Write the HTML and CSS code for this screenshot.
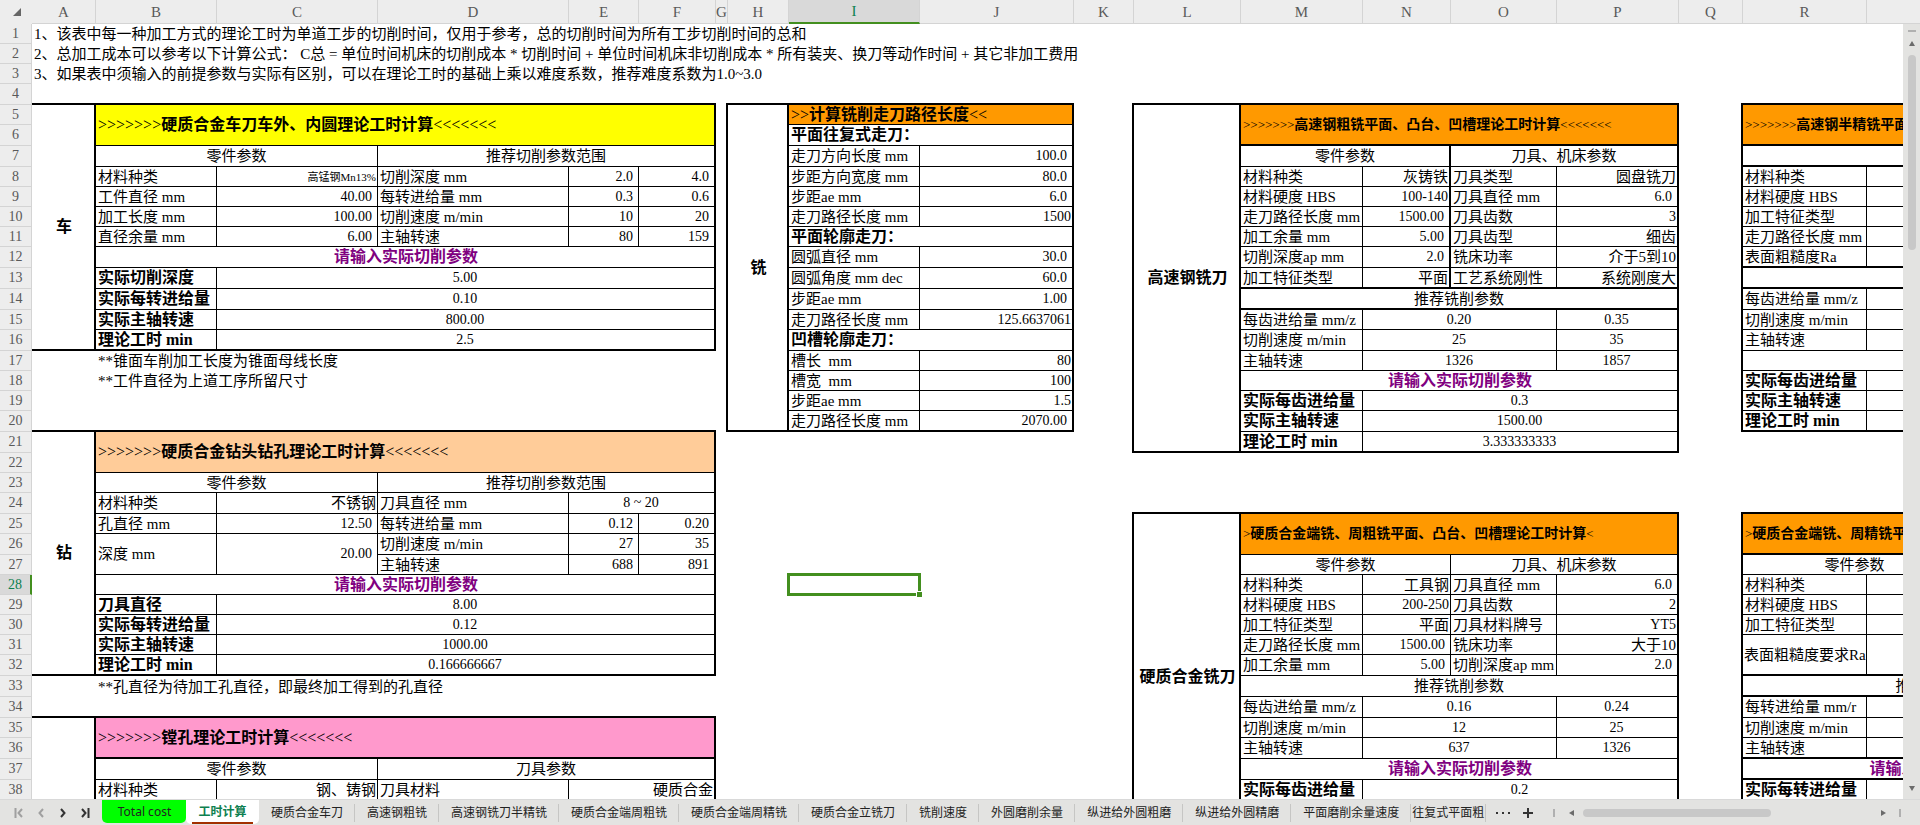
FILE: index.html
```html
<!DOCTYPE html>
<html lang="zh-CN">
<head>
<meta charset="utf-8">
<title>工时计算</title>
<link rel="stylesheet" href="styles.css">
</head>
<body>
<div class="app">
<main class="main">
<div class="sheet">
<table class="grid">
<colgroup>
<col class="w-head"><col class="w-a"><col class="w-b"><col class="w-c"><col class="w-d"><col class="w-e"><col class="w-f"><col class="w-g"><col class="w-h"><col class="w-i"><col class="w-j"><col class="w-k"><col class="w-l"><col class="w-m"><col class="w-n"><col class="w-o"><col class="w-p"><col class="w-q"><col class="w-r"><col class="w-s"><col class="w-t"><col class="w-u"><col class="w-v">
</colgroup>
<thead>
<tr><th class="corner"><svg width="8" height="8" viewBox="0 0 8 8"><path d="M8 0V8H0Z" fill="#666"/></svg></th><th>A</th><th>B</th><th>C</th><th>D</th><th>E</th><th>F</th><th>G</th><th>H</th><th class="on">I</th><th>J</th><th>K</th><th>L</th><th>M</th><th>N</th><th>O</th><th>P</th><th>Q</th><th>R</th><th></th><th></th><th></th><th></th></tr>
</thead>
<tbody>
<tr><th>1</th><td colspan="22" class="intro">1、该表中每一种加工方式的理论工时为单道工步的切削时间，仅用于参考，总的切削时间为所有工步切削时间的总和</td></tr>
<tr><th>2</th><td colspan="22" class="intro">2、总加工成本可以参考以下计算公式： C总 = 单位时间机床的切削成本 * 切削时间 + 单位时间机床非切削成本 * 所有装夹、换刀等动作时间 + 其它非加工费用</td></tr>
<tr><th>3</th><td colspan="22" class="intro">3、如果表中须输入的前提参数与实际有区别，可以在理论工时的基础上乘以难度系数，推荐难度系数为1.0~3.0</td></tr>
<tr class="tall"><th>4</th><td colspan="6" class="b"></td><td class="joint"></td><td colspan="3" class="b"></td><td class="joint"></td><td colspan="5" class="b"></td><td class="joint"></td><td colspan="5" class="b"></td></tr>
<tr><th>5</th>
<td rowspan="12" class="c r b side">车</td><td colspan="5" rowspan="2" class="c r title yellow">&gt;&gt;&gt;&gt;&gt;&gt;&gt;<b>硬质合金车刀车外、内圆理论工时计算</b>&lt;&lt;&lt;&lt;&lt;&lt;&lt;</td>
<td rowspan="16" class="r"></td><td rowspan="16" class="c r b side">铣</td><td colspan="2" class="c r title orange">&gt;&gt;<b>计算铣削走刀路径长度</b>&lt;&lt;</td>
<td rowspan="17" class="r"></td><td rowspan="17" class="c r b side">高速钢铣刀</td><td colspan="4" rowspan="2" class="c r b title orange small">&gt;&gt;&gt;&gt;&gt;&gt;&gt;<b>高速钢粗铣平面、凸台、凹槽理论工时计算</b>&lt;&lt;&lt;&lt;&lt;&lt;&lt;</td>
<td rowspan="16" class="r"></td><td colspan="5" rowspan="2" class="c b title orange small">&gt;&gt;&gt;&gt;&gt;&gt;&gt;<b>高速钢半精铣平面</b></td></tr>
<tr class="tall"><th>6</th><td colspan="2" class="c r key">平面往复式走刀：</td></tr>
<tr class="tall"><th>7</th>
<td colspan="2" class="c mid">零件参数</td><td colspan="3" class="c r mid">推荐切削参数范围</td>
<td class="c">走刀方向长度 mm</td><td class="c r num pad">100.0</td>
<td colspan="2" class="c r mid">零件参数</td><td colspan="2" class="c r mid">刀具、机床参数</td>
<td colspan="5" class="c b"></td></tr>
<tr><th>8</th>
<td class="c">材料种类</td><td class="c num tiny">高锰钢Mn13%</td><td class="c">切削深度 mm</td><td class="c num pad">2.0</td><td class="c r num pad">4.0</td>
<td class="c">步距方向宽度 mm</td><td class="c r num pad">80.0</td>
<td class="c">材料种类</td><td class="c r end">灰铸铁</td><td class="c">刀具类型</td><td class="c r end">圆盘铣刀</td>
<td class="c">材料种类</td><td colspan="4" class="c"></td></tr>
<tr><th>9</th>
<td class="c">工件直径 mm</td><td class="c num pad">40.00</td><td class="c">每转进给量 mm</td><td class="c num pad">0.3</td><td class="c r num pad">0.6</td>
<td class="c">步距ae mm</td><td class="c r num pad">6.0</td>
<td class="c">材料硬度 HBS</td><td class="c r num">100-140</td><td class="c">刀具直径 mm</td><td class="c r num pad">6.0</td>
<td class="c">材料硬度 HBS</td><td colspan="4" class="c"></td></tr>
<tr><th>10</th>
<td class="c">加工长度 mm</td><td class="c num pad">100.00</td><td class="c">切削速度 m/min</td><td class="c num pad">10</td><td class="c r num pad">20</td>
<td class="c">走刀路径长度 mm</td><td class="c r num">1500</td>
<td class="c">走刀路径长度 mm</td><td class="c r num pad">1500.00</td><td class="c">刀具齿数</td><td class="c r num">3</td>
<td class="c">加工特征类型</td><td colspan="4" class="c"></td></tr>
<tr><th>11</th>
<td class="c">直径余量 mm</td><td class="c num pad">6.00</td><td class="c">主轴转速</td><td class="c num pad">80</td><td class="c r num pad">159</td>
<td colspan="2" class="c r key">平面轮廓走刀：</td>
<td class="c">加工余量 mm</td><td class="c r num pad">5.00</td><td class="c">刀具齿型</td><td class="c r end">细齿</td>
<td class="c">走刀路径长度 mm</td><td colspan="4" class="c"></td></tr>
<tr class="tall"><th>12</th>
<td colspan="5" class="c r prompt">请输入实际切削参数</td>
<td class="c">圆弧直径 mm</td><td class="c r num pad">30.0</td>
<td class="c">切削深度ap mm</td><td class="c r num pad">2.0</td><td class="c">铣床功率</td><td class="c r end">介于5到10</td>
<td class="c b">表面粗糙度Ra</td><td colspan="4" class="c b"></td></tr>
<tr class="tall"><th>13</th>
<td class="c key">实际切削深度</td><td colspan="4" class="c r val">5.00</td>
<td class="c">圆弧角度 mm dec</td><td class="c r num pad">60.0</td>
<td class="c b">加工特征类型</td><td class="c r b end">平面</td><td class="c b">工艺系统刚性</td><td class="c r b end">系统刚度大</td>
<td colspan="5" class="c b"></td></tr>
<tr class="tall"><th>14</th>
<td class="c key">实际每转进给量</td><td colspan="4" class="c r val">0.10</td>
<td class="c">步距ae mm</td><td class="c r num pad">1.00</td>
<td colspan="4" class="c r b mid">推荐铣削参数</td>
<td class="c">每齿进给量 mm/z</td><td colspan="4" class="c"></td></tr>
<tr><th>15</th>
<td class="c key">实际主轴转速</td><td colspan="4" class="c r val">800.00</td>
<td class="c">走刀路径长度 mm</td><td class="c r num">125.6637061</td>
<td class="c">每齿进给量 mm/z</td><td colspan="2" class="c val">0.20</td><td class="c r val">0.35</td>
<td class="c">切削速度 m/min</td><td colspan="4" class="c"></td></tr>
<tr class="tall"><th>16</th>
<td class="c b key">理论工时 min</td><td colspan="4" class="c r b val">2.5</td>
<td colspan="2" class="c r key">凹槽轮廓走刀：</td>
<td class="c">切削速度 m/min</td><td colspan="2" class="c val">25</td><td class="c r val">35</td>
<td class="c">主轴转速</td><td colspan="4" class="c"></td></tr>
<tr><th>17</th>
<td></td><td colspan="5">**锥面车削加工长度为锥面母线长度</td>
<td class="c">槽长&nbsp; mm</td><td class="c r num">80</td>
<td class="c">主轴转速</td><td colspan="2" class="c val">1326</td><td class="c r val">1857</td>
<td colspan="5" class="c"></td></tr>
<tr><th>18</th>
<td></td><td colspan="5">**工件直径为上道工序所留尺寸</td>
<td class="c">槽宽&nbsp; mm</td><td class="c r num">100</td>
<td colspan="4" class="c r prompt">请输入实际切削参数</td>
<td class="c key">实际每齿进给量</td><td colspan="4" class="c"></td></tr>
<tr><th>19</th>
<td colspan="6"></td>
<td class="c">步距ae mm</td><td class="c r num">1.5</td>
<td class="c key">实际每齿进给量</td><td colspan="3" class="c r val">0.3</td>
<td class="c key">实际主轴转速</td><td colspan="4" class="c"></td></tr>
<tr class="tall"><th>20</th>
<td colspan="6" class="b"></td>
<td class="c b">走刀路径长度 mm</td><td class="c r b num pad">2070.00</td>
<td class="c key">实际主轴转速</td><td colspan="3" class="c r val">1500.00</td>
<td class="c b key">理论工时 min</td><td colspan="4" class="c b"></td></tr>
<tr class="tall"><th>21</th>
<td rowspan="12" class="c r b side">钻</td><td colspan="5" rowspan="2" class="c r title peach">&gt;&gt;&gt;&gt;&gt;&gt;&gt;<b>硬质合金钻头钻孔理论工时计算</b>&lt;&lt;&lt;&lt;&lt;&lt;&lt;</td>
<td colspan="4"></td>
<td class="c b key">理论工时 min</td><td colspan="3" class="c r b val">3.333333333</td>
<td colspan="6"></td></tr>
<tr><th>22</th><td colspan="16"></td></tr>
<tr><th>23</th>
<td colspan="2" class="c mid">零件参数</td><td colspan="3" class="c r mid">推荐切削参数范围</td><td colspan="16"></td></tr>
<tr class="tall"><th>24</th>
<td class="c">材料种类</td><td class="c end">不锈钢</td><td class="c">刀具直径 mm</td><td colspan="2" class="c r val">8 ~ 20</td>
<td colspan="5" class="joint"></td><td colspan="5" class="b"></td><td class="joint"></td><td colspan="5" class="b"></td></tr>
<tr><th>25</th>
<td class="c">孔直径 mm</td><td class="c num pad">12.50</td><td class="c">每转进给量 mm</td><td class="c num pad">0.12</td><td class="c r num pad">0.20</td>
<td colspan="4"></td><td rowspan="16" class="r"></td><td rowspan="16" class="c r b side">硬质合金铣刀</td>
<td colspan="4" rowspan="2" class="c r title orange small">&gt;<b>硬质合金端铣、周粗铣平面、凸台、凹槽理论工时计算</b>&lt;</td>
<td rowspan="16" class="r"></td><td colspan="5" rowspan="2" class="c b title orange small">&gt;<b>硬质合金端铣、周精铣平面</b></td></tr>
<tr class="tall"><th>26</th>
<td rowspan="2" class="c">深度 mm</td><td rowspan="2" class="c num pad">20.00</td><td class="c">切削速度 m/min</td><td class="c num pad">27</td><td class="c r num pad">35</td>
<td colspan="4"></td></tr>
<tr><th>27</th>
<td class="c">主轴转速</td><td class="c num pad">688</td><td class="c r num pad">891</td><td colspan="4"></td>
<td colspan="2" class="c mid">零件参数</td><td colspan="2" class="c r mid">刀具、机床参数</td>
<td colspan="2" class="c mid">零件参数</td><td colspan="3" class="c"></td></tr>
<tr><th class="on">28</th>
<td colspan="5" class="c r prompt">请输入实际切削参数</td><td colspan="2"></td><td class="selected"></td><td></td>
<td class="c">材料种类</td><td class="c end">工具钢</td><td class="c">刀具直径 mm</td><td class="c r num pad">6.0</td>
<td class="c">材料种类</td><td colspan="4" class="c"></td></tr>
<tr><th>29</th>
<td class="c key">刀具直径</td><td colspan="4" class="c r val">8.00</td><td colspan="4"></td>
<td class="c">材料硬度 HBS</td><td class="c num">200-250</td><td class="c">刀具齿数</td><td class="c r num">2</td>
<td class="c">材料硬度 HBS</td><td colspan="4" class="c"></td></tr>
<tr><th>30</th>
<td class="c key">实际每转进给量</td><td colspan="4" class="c r val">0.12</td><td colspan="4"></td>
<td class="c">加工特征类型</td><td class="c end">平面</td><td class="c">刀具材料牌号</td><td class="c r num">YT5</td>
<td class="c">加工特征类型</td><td colspan="4" class="c"></td></tr>
<tr><th>31</th>
<td class="c key">实际主轴转速</td><td colspan="4" class="c r val">1000.00</td><td colspan="4"></td>
<td class="c">走刀路径长度 mm</td><td class="c num pad">1500.00</td><td class="c">铣床功率</td><td class="c r end">大于10</td>
<td rowspan="2" class="c b fit">表面粗糙度要求Ra</td><td colspan="4" rowspan="2" class="c b"></td></tr>
<tr class="tall"><th>32</th>
<td class="c b key">理论工时 min</td><td colspan="4" class="c r b val">0.166666667</td><td colspan="4"></td>
<td class="c">加工余量 mm</td><td class="c num pad">5.00</td><td class="c">切削深度ap mm</td><td class="c r num pad">2.0</td></tr>
<tr class="tall"><th>33</th>
<td></td><td colspan="5">**孔直径为待加工孔直径，即最终加工得到的孔直径</td><td colspan="4"></td>
<td colspan="4" class="c r mid">推荐铣削参数</td>
<td colspan="4" class="c b mid">推荐铣削参数</td><td class="b"></td></tr>
<tr class="tall"><th>34</th>
<td colspan="6" class="b"></td><td colspan="4"></td>
<td class="c">每齿进给量 mm/z</td><td colspan="2" class="c val">0.16</td><td class="c r val">0.24</td>
<td class="c">每转进给量 mm/r</td><td colspan="4" class="c"></td></tr>
<tr><th>35</th>
<td rowspan="6" class="c r side"></td><td colspan="5" rowspan="2" class="c r b title pink">&gt;&gt;&gt;&gt;&gt;&gt;&gt;<b>镗孔理论工时计算</b>&lt;&lt;&lt;&lt;&lt;&lt;&lt;</td><td colspan="4"></td>
<td class="c">切削速度 m/min</td><td colspan="2" class="c val">12</td><td class="c r val">25</td>
<td class="c">切削速度 m/min</td><td colspan="4" class="c"></td></tr>
<tr class="tall"><th>36</th>
<td colspan="4"></td>
<td class="c">主轴转速</td><td colspan="2" class="c val">637</td><td class="c r val">1326</td>
<td class="c b">主轴转速</td><td colspan="4" class="c b"></td></tr>
<tr class="tall"><th>37</th>
<td colspan="2" class="c mid">零件参数</td><td colspan="3" class="c r mid">刀具参数</td><td colspan="4"></td>
<td colspan="4" class="c r prompt">请输入实际切削参数</td>
<td colspan="4" class="c b prompt">请输入实际切削参数</td><td class="b"></td></tr>
<tr class="tall"><th>38</th>
<td class="c">材料种类</td><td class="c end">钢、铸钢</td><td class="c">刀具材料</td><td colspan="2" class="c r end">硬质合金</td><td colspan="4"></td>
<td class="c key">实际每齿进给量</td><td colspan="3" class="c r val">0.2</td>
<td class="c key">实际每转进给量</td><td colspan="4" class="c"></td></tr>
<tr><th></th><td colspan="5" class="c r"></td><td colspan="4"></td><td colspan="4" class="c r"></td><td colspan="5" class="c"></td></tr>
<tr><th></th><td colspan="5" class="c r"></td><td colspan="4"></td><td colspan="4" class="c r b"></td><td colspan="5" class="c b"></td></tr>
</tbody>
</table>
</div>
<div class="vscroll">
<div class="vscroll-cap"></div>
<span class="split-h"></span>
<button class="arrow" aria-label="向上滚动"><svg width="6" height="5" viewBox="0 0 6 5"><path d="M3 0L6 5H0Z"/></svg></button>
<div class="vtrack"><div class="vthumb"></div></div>
<button class="arrow" aria-label="向下滚动"><svg width="6" height="5" viewBox="0 0 6 5"><path d="M0 0H6L3 5Z"/></svg></button>
</div>
</main>
<footer class="tabbar">
<div class="steps">
<button class="off" aria-label="第一张"><svg width="10" height="12" viewBox="0 0 10 12"><path d="M1.5 1V11M8 2L4.5 6L8 10"/></svg></button>
<button class="off" aria-label="上一张"><svg width="10" height="12" viewBox="0 0 10 12"><path d="M7 2L3.5 6L7 10"/></svg></button>
<button aria-label="下一张"><svg width="10" height="12" viewBox="0 0 10 12"><path d="M3 2L6.5 6L3 10"/></svg></button>
<button aria-label="最后一张"><svg width="10" height="12" viewBox="0 0 10 12"><path d="M2 2L5.5 6L2 10M8.500 1V11"/></svg></button>
</div>
<nav class="tabs">
<button class="tab total">Total cost</button>
<button class="tab active">工时计算</button>
<button class="tab">硬质合金车刀</button>
<button class="tab">高速钢粗铣</button>
<button class="tab">高速钢铣刀半精铣</button>
<button class="tab">硬质合金端周粗铣</button>
<button class="tab">硬质合金端周精铣</button>
<button class="tab">硬质合金立铣刀</button>
<button class="tab">铣削速度</button>
<button class="tab">外圆磨削余量</button>
<button class="tab">纵进给外圆粗磨</button>
<button class="tab">纵进给外圆精磨</button>
<button class="tab">平面磨削余量速度</button>
<button class="tab cut">往复式平面粗</button>
</nav>
<button class="more" aria-label="更多工作表"><svg width="14" height="4" viewBox="0 0 14 4"><path d="M0 1H2V3H0ZM6 1H8V3H6ZM12 1H14V3H12Z"/></svg></button>
<button class="more" aria-label="新建工作表"><svg width="10" height="10" viewBox="0 0 10 10"><path d="M4 0H6V4H10V6H6V10H4V6H0V4H4Z"/></svg></button>
<span class="split-v first"></span>
<button class="arrow" aria-label="向左滚动"><svg width="5" height="6" viewBox="0 0 5 6"><path d="M5 0V6L0 3Z"/></svg></button>
<div class="htrack"><div class="hthumb"></div></div>
<button class="arrow" aria-label="向右滚动"><svg width="5" height="6" viewBox="0 0 5 6"><path d="M0 0V6L5 3Z"/></svg></button>
<span class="split-v last"></span>
</footer>
</div>
</body>
</html>
```
FILE: styles.css
```css
* { box-sizing: border-box; }
body { margin: 0; background: #fff; }
button { border: 0; padding: 0; margin: 0; background: none; font: inherit; color: inherit; }
svg { display: block; }

.app { display: flex; flex-direction: column; height: 100vh; overflow: hidden; }
.main { display: flex; flex: 1; min-height: 0; }
.sheet { flex: 1; min-width: 0; overflow: hidden; }

/* grid */
.grid {
  width: 100%;
  table-layout: fixed;
  border-collapse: separate;
  border-spacing: 0;
  font: 15px/18px "Liberation Serif", "Noto Sans CJK SC", serif;
  color: #000;
}
.w-head { width: 32px; } .w-a { width: 64px; } .w-b { width: 121px; }
.w-c { width: 161px; } .w-d { width: 191px; } .w-e { width: 70px; }
.w-f { width: 77px; } .w-g { width: 12px; } .w-h { width: 61px; }
.w-i { width: 131px; } .w-j { width: 154px; } .w-k { width: 60px; }
.w-l { width: 107px; } .w-m { width: 122px; } .w-n { width: 88px; }
.w-o { width: 106px; } .w-p { width: 122px; } .w-q { width: 64px; }
.w-r { width: 124px; } .w-s { width: 100px; } .w-t { width: 76px; }
.w-u { width: 96px; } .w-v { width: 160px; }

.grid tr { height: 20px; }
.grid tr.tall { height: 21px; }
.grid thead tr { height: 24px; }

.grid th {
  padding: 0;
  background: #ededed;
  border-right: 1px solid #d4d4d4;
  border-bottom: 1px solid #d4d4d4;
  font-weight: 400;
  color: #595959;
}
.grid tbody th { font-size: 14px; }
.grid th.on { background: #d9d9d9; color: #0d8050; }
.grid thead th.on { border-bottom: 2px solid #438f1f; }
.grid tbody th.on { border-right: 2px solid #438f1f; }
.grid th.corner { border-right-color: #ededed; border-bottom-color: #ededed; }
.corner svg { margin-left: 13px; }

.grid td { padding: 0 0 0 2px; white-space: nowrap; vertical-align: middle; }
.grid .c { border-right: 1px solid #000; border-bottom: 1px solid #000; }
.grid .r { border-right: 2px solid #000; }
.grid .b { border-bottom: 2px solid #000; }
.grid .joint { background: linear-gradient(#000, #000) right bottom / 2px 2px no-repeat; }
.grid .mid { padding: 0; text-align: center; }
.grid .val { padding: 0 1px 0 0; text-align: center; font-size: 14px; }
.grid .end { padding: 0 1px 0 0; text-align: right; }
.grid .num { padding: 0 1px 0 0; text-align: right; font-size: 14px; }
.grid .pad { padding-right: 5px; }
.grid .tiny { font-size: 11px; }
.grid .fit { padding-left: 1px; }
.grid .key { font-size: 16px; font-weight: 700; }
.grid .side { padding: 0 0 0 2px; text-align: center; font-size: 16px; font-weight: 700; }
.grid .prompt { padding: 0 0 0 2px; text-align: center; font-size: 16px; font-weight: 700; color: #800080; }
.grid .title { font-size: 16px; }
.grid .small { font-size: 13px; }
.small b { font-size: 14px; }
.yellow { background: #ff0; }
.orange { background: #f90; }
.peach { background: #fc9; }
.pink { background: #f9c; }

/* active cell frame with its fill handle */
.selected { position: relative; }
.selected::before {
  content: "";
  position: absolute;
  inset: -2px -1px -1px -2px;
  border: 3px solid #438f1f;
}
.selected::after {
  content: "";
  position: absolute;
  right: -2px;
  bottom: -2px;
  width: 5px;
  height: 5px;
  background: #438f1f;
  box-shadow: 0 0 0 1px #fff;
}

/* vertical scroll bar */
.vscroll {
  display: flex;
  flex-direction: column;
  align-items: center;
  width: 17px;
  background: #e3e3e1;
}
.vscroll-cap { width: 100%; height: 24px; background: #ededed; border-bottom: 1px solid #d4d4d4; }
.split-h { width: 8px; height: 2px; margin: 6px 0 9px; background: #b0b0b0; }
.arrow { fill: #6b6b6b; }
.vtrack { flex: 1; width: 8px; padding: 9px 0; }
.vthumb { height: 27%; border-radius: 4px; background: #c8c8c8; }
.vscroll .arrow:last-child { margin-bottom: 8px; }

/* sheet tabs */
.tabbar {
  display: flex;
  align-items: center;
  height: 26px;
  background: #e3e3e1;
  border-top: 1px solid #d9d9d9;
  font: 12px/18px "Noto Sans", "Noto Sans CJK SC", sans-serif;
  color: #222;
}
.steps { display: flex; gap: 12px; width: 102px; padding-left: 14px; }
.steps svg { fill: none; stroke: #333; stroke-width: 2; }
.steps .off svg { stroke: #a0a0a0; }
.tabs { display: flex; align-self: stretch; align-items: center; }
.tab { height: 18px; padding: 0 11px 0 12px; border-right: 1px solid #c6c6c4; white-space: nowrap; }
.tab.total { align-self: flex-start; width: 84px; height: 23px; border: 0; border-radius: 0 0 5px 5px; background: #0f0; }
.tab.active {
  align-self: flex-start;
  width: 73px;
  height: 24px;
  padding: 0 6px;
  border: 0;
  border-radius: 0 0 5px 5px;
  background: linear-gradient(#a33000, #a33000) center bottom / 61px 2px no-repeat #fff;
  font-weight: 700;
  color: #0d8050;
}
.tab.cut { padding: 0 1px; }
.more { margin-left: 10px; fill: #333; }
.more + .more { margin-left: 13px; }
.split-v { width: 2px; height: 8px; background: #b0b0b0; }
.split-v.first { margin: 0 14px 0 20px; }
.split-v.last { margin: 0 19px 0 13px; }
.htrack { flex: 1; padding: 0 9px; }
.hthumb { width: 65%; height: 8px; border-radius: 4px; background: #c8c8c8; }
```
